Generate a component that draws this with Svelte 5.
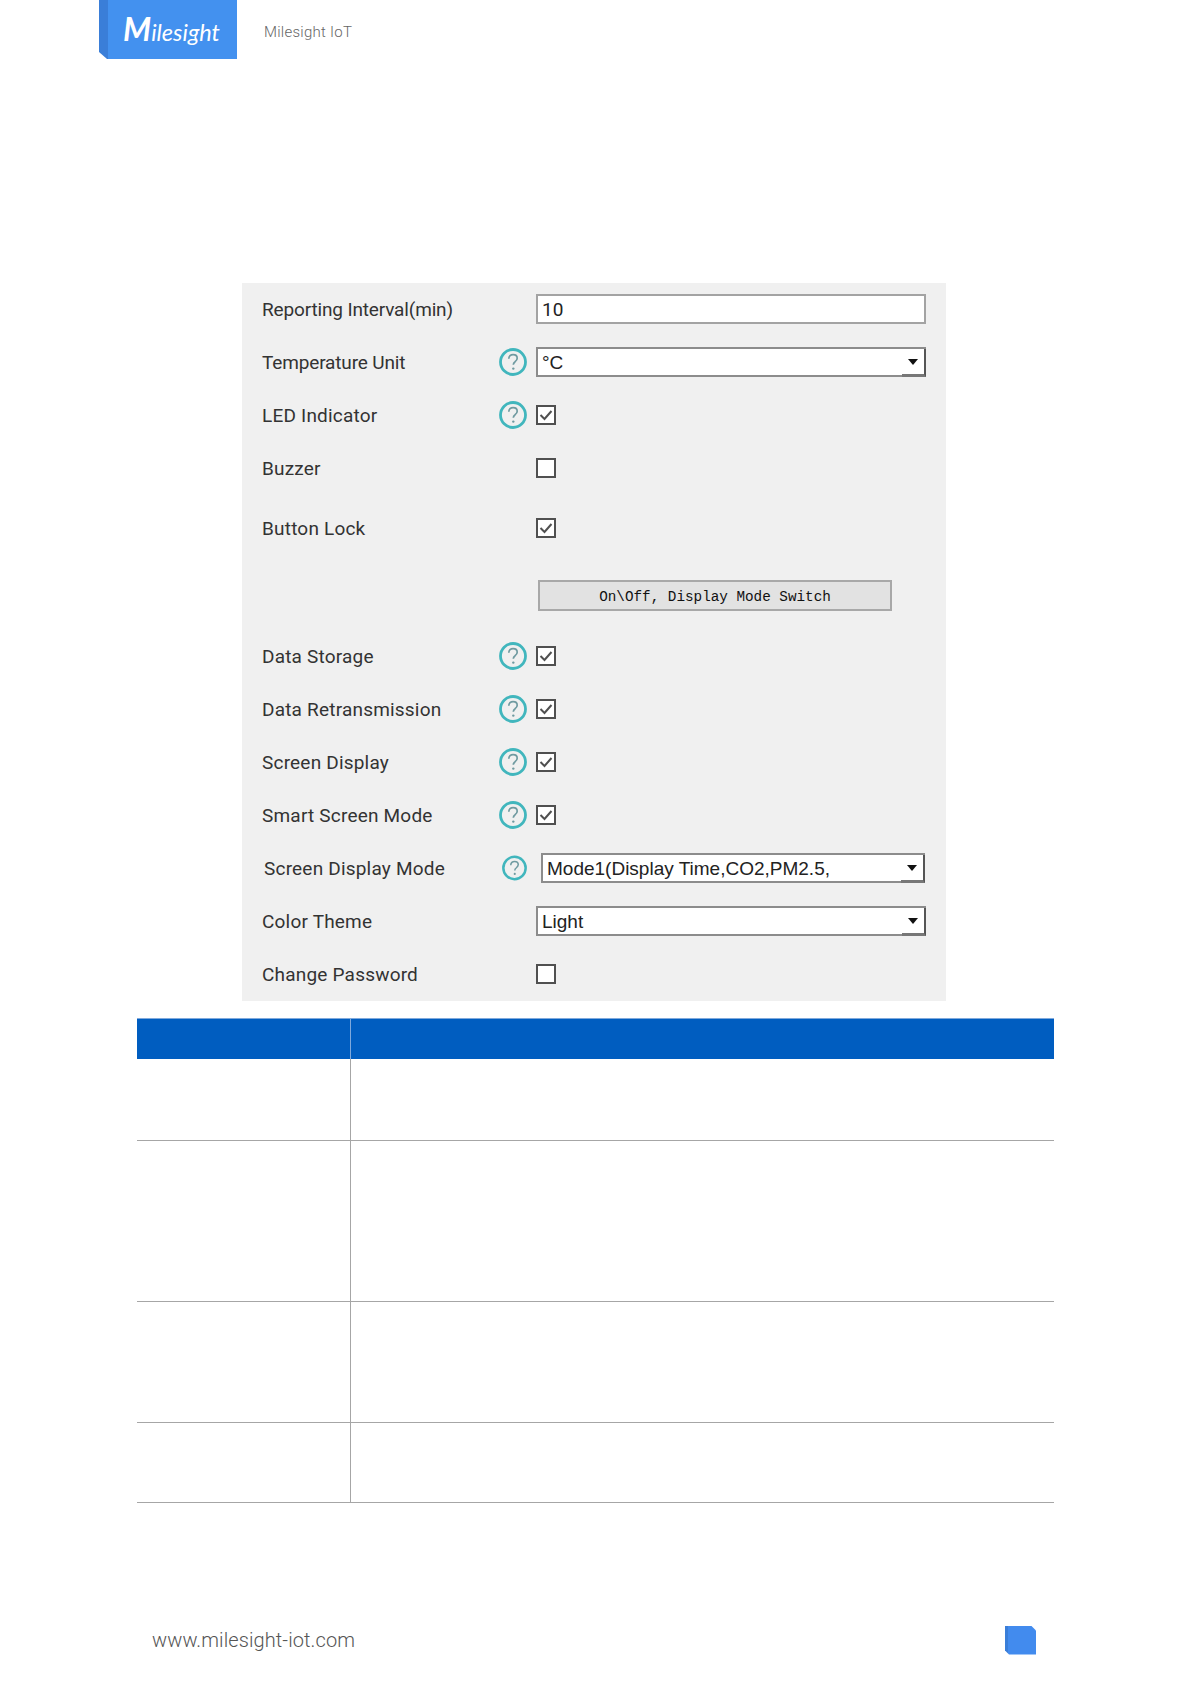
<script lang="ts">
  const rows = [
    { label: 'Reporting Interval(min)', type: 'input', value: '10', extra: 'tight' },
    { label: 'Temperature Unit', help: true, type: 'select', value: '°C', extra: 'tight' },
    { label: 'LED Indicator', help: true, type: 'check', checked: true },
    { label: 'Buzzer', type: 'check', checked: false },
    { label: 'Button Lock', type: 'check', checked: true, extra: 'lock' },
    { type: 'button', value: 'On\\Off, Display Mode Switch' },
    { label: 'Data Storage', help: true, type: 'check', checked: true },
    { label: 'Data Retransmission', help: true, type: 'check', checked: true },
    { label: 'Screen Display', help: true, type: 'check', checked: true },
    { label: 'Smart Screen Mode', help: true, type: 'check', checked: true },
    { label: 'Screen Display Mode', help: true, type: 'select', value: 'Mode1(Display Time,CO2,PM2.5,', extra: 'shifted' },
    { label: 'Color Theme', type: 'select', value: 'Light' },
    { label: 'Change Password', type: 'check', checked: false }
  ]

  const tableRows = [81, 161, 121, 80]
</script>

<div class="page">
  <header>
    <div class="logo"><span class="logo-text"><span class="big">M</span>ilesight</span></div>
    <span class="brand">Milesight IoT</span>
  </header>

  <section class="panel">
    {#each rows as row}
      <div class="row {row.type} {row.extra ?? ''}">
        <span class="label">{row.label ?? ''}</span>
        <span class="help-slot">
          {#if row.help}
            <svg class="help" viewBox="0 0 28 28" width="28" height="28">
              <circle cx="14" cy="14" r="12.5" fill="none" stroke="#41b6bd" stroke-width="2.8" />
              <path d="M9.8 10.8c0-2.6 1.9-4.2 4.3-4.2s4.1 1.5 4.1 3.6c0 1.7-1 2.6-2.1 3.5-1.2.9-1.8 1.5-1.8 3.1" fill="none" stroke="#6f9aa0" stroke-width="1.7" />
              <circle cx="14.3" cy="20.6" r="1.2" fill="#6f9aa0" />
            </svg>
          {/if}
        </span>
        {#if row.type === 'input'}
          <div class="field">{row.value}</div>
        {:else if row.type === 'select'}
          <div class="field dropdown">
            <span>{row.value}</span>
            <span class="arrow">
              <svg viewBox="0 0 10 6" width="10" height="6"><path d="M0 0h10L5 6z" fill="#111" /></svg>
            </span>
          </div>
        {:else if row.type === 'check'}
          <svg class="box" viewBox="0 0 20 20" width="20" height="20">
            <rect x="1" y="1" width="18" height="18" fill="#fff" stroke="#505050" stroke-width="2" />
            {#if row.checked}
              <path d="M4.5 10l4 4 7-8" fill="none" stroke="#505050" stroke-width="2" />
            {/if}
          </svg>
        {:else if row.type === 'button'}
          <div class="switch">{row.value}</div>
        {/if}
      </div>
    {/each}
  </section>

  <table>
    <thead>
      <tr><th class="first"></th><th></th></tr>
    </thead>
    <tbody>
      {#each tableRows as h}
        <tr style="height: {h}px"><td class="first"></td><td></td></tr>
      {/each}
    </tbody>
  </table>

  <footer>
    <span class="url">www.milesight-iot.com</span>
    <span class="page-mark"></span>
  </footer>
</div>

<style>
  :global(body) {
    margin: 0;
    background: #fff;
  }

  .page {
    width: 1191px;
    height: 1684px;
    overflow: hidden;
    font-family: Roboto, "Liberation Sans", sans-serif;
  }

  header {
    display: flex;
    align-items: center;
    height: 59px;
    padding-left: 99px;
  }

  .logo {
    width: 138px;
    height: 59px;
    box-sizing: border-box;
    padding: 11px 0 0 24px;
    background: linear-gradient(90deg, #3a7ed8 0, #3a7ed8 9px, #4391ef 9px);
    clip-path: polygon(0 0, 100% 0, 100% 100%, 8px 100%, 0 52px);
  }

  .logo-text {
    color: #fff;
    font-family: Lato, sans-serif;
    font-style: italic;
    font-weight: 400;
    font-size: 23.5px;
    line-height: 36px;
  }

  .big {
    font-size: 32px;
    font-weight: 700;
  }

  .brand {
    margin: 4px 0 0 27px;
    color: #666;
    font-size: 15px;
    font-weight: 300;
    letter-spacing: 0.25px;
  }

  .panel {
    width: 684px;
    height: 718px;
    margin: 224px 0 0 242px;
    padding-left: 20px;
    background: #f0f0f0;
  }

  .row {
    display: grid;
    grid-template-columns: 237px 28px 389px;
    align-items: center;
    height: 53px;
    color: #333;
    font-size: 19px;
  }

  .help-slot {
    display: flex;
    height: 28px;
    margin-bottom: 2px;
  }

  .label {
    white-space: nowrap;
    letter-spacing: 0.2px;
  }

  .tight .label {
    letter-spacing: -0.15px;
  }

  .lock {
    margin-top: 7px;
  }

  .row.button {
    height: 75px;
    padding-top: 6px;
    box-sizing: border-box;
  }

  .field {
    box-sizing: border-box;
    width: 390px;
    height: 30px;
    margin: 0 0 1px 9px;
    padding-left: 4px;
    border: 2px solid #a3a3a3;
    background: #fff;
    color: #222;
    font-size: 19px;
    line-height: 28px;
  }

  .dropdown {
    display: flex;
    justify-content: space-between;
    border-color: #8c8c8c;
    font-family: "Liberation Sans", sans-serif;
  }

  .arrow {
    display: flex;
    align-items: center;
    justify-content: center;
    width: 24px;
    margin: 0 -2px -2px 0;
    border-right: 2px solid #555;
    border-bottom: 3px solid #777;
    box-sizing: border-box;
  }

  .shifted .label {
    margin-left: 2px;
  }

  .shifted .help-slot {
    margin-left: 3px;
  }

  .shifted .field {
    width: 384px;
    margin-left: 14px;
  }

  .box {
    display: block;
    margin: 0 0 2px 9px;
  }

  .switch {
    box-sizing: border-box;
    width: 354px;
    height: 31px;
    margin-left: 11px;
    border: 2px solid #a8a8a8;
    background: #e2e2e2;
    color: #111;
    font-family: "Liberation Mono", monospace;
    font-size: 14.3px;
    line-height: 30px;
    text-align: center;
    white-space: nowrap;
  }

  table {
    width: 917px;
    margin: 17px 0 0 137px;
    border-collapse: collapse;
    table-layout: fixed;
  }

  th {
    height: 40px;
    padding: 0;
    background: #005dc0;
    border-top: 1px solid #7fa9dc;
  }

  th.first {
    width: 213px;
    border-right: 1px solid #7fa9dc;
  }

  td {
    padding: 0;
    border-bottom: 1.5px solid #a6a6a6;
  }

  td.first {
    border-right: 1.5px solid #a6a6a6;
  }

  footer {
    display: flex;
    justify-content: space-between;
    align-items: center;
    margin-top: 123px;
    padding: 0 155px 0 152px;
  }

  .url {
    color: #555;
    font-size: 20px;
    font-weight: 300;
    letter-spacing: 0.1px;
  }

  .page-mark {
    width: 31px;
    height: 29px;
    background: linear-gradient(90deg, #3a7ed8 0, #3a7ed8 3px, #428bee 3px);
    clip-path: polygon(0 0, 26px 0, 100% 5px, 100% 100%, 4px 100%, 0 25px);
  }
</style>
